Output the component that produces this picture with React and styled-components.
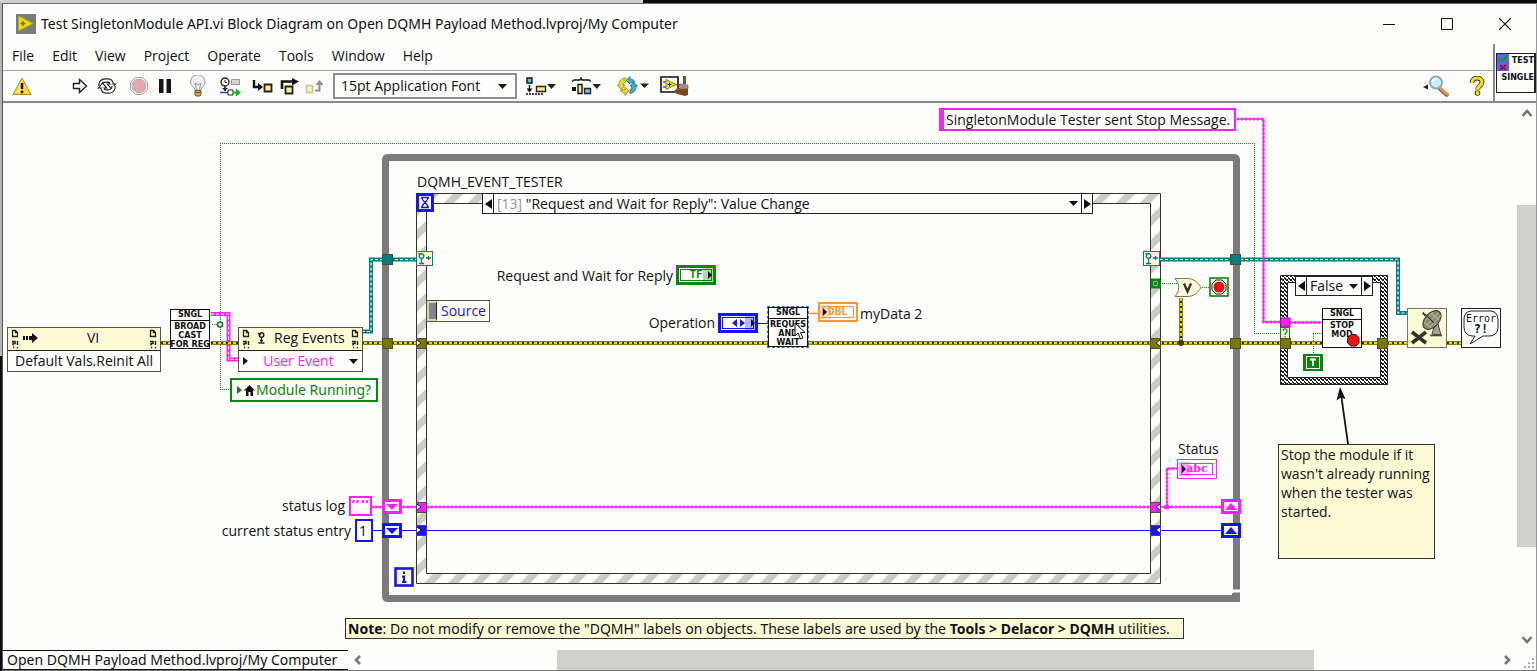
import React from 'react';
import styled, { createGlobalStyle, css } from 'styled-components';

const UI_FONT = '"Open Sans", "Noto Sans", sans-serif';
const WIDE_FONT = '"Noto Sans", "Open Sans", sans-serif';
const C = {
  paper: '#fdfdfb',
  cream: '#fcfbd6',
  ink: '#111',
  pink: '#ff1cff',
  blue: '#1414ff',
  green: '#0c860c',
  teal: '#00807c',
  olive: '#787800',
  orange: '#ff9438',
  loop: '#7b7b7b',
  thumb: '#cfcfcb',
};

/* Diagram coordinates of the canvas' top-left corner (current scroll position). */
const ORIGIN = { x: 3, y: 103 };

const GlobalStyle = createGlobalStyle`
  *, *::before, *::after { box-sizing: border-box; }
  body { margin: 0; font-family: ${UI_FONT}; font-size: 14px; color: ${C.ink}; background: ${C.paper}; }
  button { margin: 0; padding: 0; border: 0; background: none; font: inherit; color: inherit; }
  svg { display: block; }
`;

/* ---------- window chrome ---------- */

const Desktop = styled.div`
  min-height: 100vh;
  display: flex;
  padding: 3px 0 0 2px;
  background:
    linear-gradient(#cfcfcf, #cfcfcf) 0 0 / 643px 3px no-repeat,
    linear-gradient(#b4b4b4, #b4b4b4) 0 0 / 2px 356px no-repeat,
    #0b0b0b;
`;
const Window = styled.div`
  flex: 1;
  min-width: 0;
  display: flex;
  flex-direction: column;
  border: 1px solid #777;
  border-color: #6f6f6f #999 #777 #555;
  background: ${C.paper};
`;
const TitleBar = styled.header`
  display: flex;
  align-items: center;
  height: 40px;
  padding: 0 2px 0 13px;
`;
const Title = styled.h1`
  flex: 1;
  margin: 0 0 0 5px;
  font-family: ${WIDE_FONT};
  font-size: 14px;
  font-weight: 400;
  line-height: 22px;
  white-space: nowrap;
`;
const CaptionButton = styled.button`
  width: 58px;
  height: 40px;
  display: grid;
  place-items: center;
`;
const Bars = styled.div`
  display: flex;
  border-bottom: 2px solid #8a8a8a;
`;
const BarsMain = styled.div`
  flex: 1;
  min-width: 0;
`;
const MenuBar = styled.nav`
  display: flex;
  align-items: center;
  gap: 18px;
  height: 27px;
  padding: 0 9px 2px;
  border-bottom: 1px solid #a8a8a8;
`;
const MenuItem = styled.button`
  line-height: 20px;
`;
const Toolbar = styled.div`
  display: flex;
  align-items: center;
  height: 30px;
  padding: 0 8px 0 6px;
`;
const ToolGroup = styled.div`
  display: flex;
  align-items: center;
  margin-left: ${(p) => p.$gap || 0}px;
`;
const Tool = styled.button`
  width: ${(p) => p.$w}px;
  height: 26px;
  display: grid;
  place-items: center;
`;
const Spacer = styled.div`
  flex: 1;
`;
const FontPicker = styled.label`
  display: grid;
  grid-template-columns: 1fr 26px;
  align-items: center;
  width: 184px;
  height: 26px;
  margin-left: 6px;
  border: 2px solid #8e8e8e;
`;
const FontSelect = styled.select`
  grid-area: 1 / 1 / 2 / 3;
  appearance: none;
  width: 100%;
  height: 22px;
  padding: 0 0 0 6px;
  border: 0;
  background: transparent;
  font: inherit;
  line-height: 20px;
  color: inherit;
`;
const FontArrow = styled.span`
  grid-area: 1 / 2;
  justify-self: center;
  pointer-events: none;
`;
const IconPane = styled.div`
  display: flex;
  align-items: center;
  padding: 0 0 0 1px;
  border-left: 2px solid #8a8a8a;
`;
const ProjectIcon = styled.div`
  display: grid;
  grid-template-columns: 12px 1fr;
  grid-template-rows: 17px 1fr;
  width: 40px;
  height: 40px;
  border: 1px solid #222;
  border-right-width: 2px;
  font: bold 8px/14px "DejaVu Sans", sans-serif;
  text-align: right;
`;
const IconLine = styled.span`
  grid-column: ${(p) => (p.$wide ? '1 / 3' : '2')};
`;

/* ---------- scroll bars ---------- */

const Work = styled.div`
  flex: 1;
  display: grid;
  grid-template-columns: minmax(0, 1fr) 19px;
  grid-template-rows: minmax(546px, 1fr) 20px;
`;
const VBar = styled.div`
  display: flex;
  flex-direction: column;
`;
const HRow = styled.div`
  display: flex;
`;
const Track = styled.div`
  flex: 1;
  display: flex;
  flex-direction: ${(p) => (p.$vertical ? 'column' : 'row')};
`;
const TrackPart = styled.div`
  flex: ${(p) => p.$grow} 0 0;
  background: ${(p) => (p.$thumb ? C.thumb : 'transparent')};
`;
const ScrollButton = styled.button`
  width: 20px;
  height: 20px;
  display: grid;
  place-items: center;
`;
const Target = styled.div`
  border-top: 1px solid #111;
  border-bottom: 1px solid #111;
  padding: 0 11px 0 4px;
  font-family: ${WIDE_FONT};
  line-height: 17px;
  white-space: nowrap;
`;
const Corner = styled.div`
  display: flex;
  align-items: flex-end;
  justify-content: flex-end;
`;

/* ---------- diagram canvas ---------- */

const Canvas = styled.main`
  position: relative;
  overflow: hidden;
`;
const placed = css`
  position: absolute;
  left: ${(p) => p.$x - ORIGIN.x}px;
  top: ${(p) => p.$y - ORIGIN.y}px;
`;
const Wires = styled.svg`
  position: absolute;
  inset: 0;
  width: 100%;
  height: 100%;
`;
const Glyph = styled.svg`
  ${placed}
`;
const Label = styled.span`
  ${placed}
  width: ${(p) => (p.$w ? `${p.$w}px` : 'auto')};
  text-align: ${(p) => (p.$w ? 'right' : 'left')};
  line-height: 20px;
  white-space: nowrap;
`;
const Selector = styled.div`
  ${placed}
  display: grid;
  grid-template-columns: 10px 1fr 10px;
  width: ${(p) => p.$w}px;
  height: ${(p) => p.$h}px;
  border: 1px solid #222;
  background: ${C.paper};
`;
const SelectorArrow = styled.button`
  display: grid;
  place-items: center;
`;
const SelectorValue = styled.button`
  display: flex;
  align-items: center;
  justify-content: space-between;
  padding: 0 3px;
  border: solid #222;
  border-width: 0 1px;
  line-height: 18px;
  white-space: nowrap;
`;
const Dim = styled.span`
  color: #999;
`;
const PropertyNode = styled.div`
  ${placed}
  width: ${(p) => p.$w}px;
  border: 1px solid #55553f;
  background: ${C.paper};
`;
const NodeHead = styled.div`
  display: grid;
  grid-template-columns: 14px 1fr 14px;
  align-items: center;
  height: 23px;
  background: ${C.cream};
  border-bottom: 1px solid #222;
`;
const NodeTitle = styled.div`
  display: flex;
  align-items: center;
  gap: ${(p) => p.$gap}px;
  padding-left: ${(p) => p.$pad}px;
  line-height: 18px;
  padding-bottom: 2px;
  white-space: nowrap;
`;
const NodeRow = styled.button`
  display: flex;
  align-items: center;
  justify-content: ${(p) => (p.$menu ? 'space-between' : 'center')};
  width: 100%;
  height: 20px;
  padding: 0 ${(p) => (p.$menu ? 4 : 0)}px;
  line-height: 20px;
  color: ${(p) => (p.$menu ? C.pink : C.ink)};
  white-space: nowrap;
`;
const SubVi = styled.div`
  ${placed}
  width: 40px;
  height: 40px;
  border: 1px solid #111;
  outline: ${(p) => (p.$selected ? '1px dashed #2f7fb8' : 'none')};
  background: ${C.paper};
  font: bold 8px/9px "DejaVu Sans", sans-serif;
  text-align: center;
  white-space: nowrap;
`;
const SubViHead = styled.div`
  height: 11px;
  margin-bottom: 1px;
  line-height: 10px;
  border-bottom: 1px solid #111;
`;
const SubViLine = styled.div`
  display: flex;
  justify-content: center;
`;
const Local = styled.div`
  ${placed}
  display: flex;
  align-items: center;
  width: 148px;
  height: 24px;
  padding: 0 4px;
  border: 2px solid ${C.green};
  background: ${C.paper};
  color: ${C.green};
  font-family: ${WIDE_FONT};
  line-height: 20px;
  white-space: nowrap;
`;
const EventData = styled.div`
  ${placed}
  display: flex;
  height: 22px;
  border: 1px solid #55553f;
  background: ${C.paper};
  color: ${C.blue};
  line-height: 20px;
`;
const EventGrip = styled.span`
  width: 10px;
  border: 2px solid #d8d6bd;
  border-right: 1px solid #222;
  background: #858585;
`;
const EventName = styled.span`
  padding: 0 3px 0 4px;
`;
const Terminal = styled.div`
  ${placed}
  display: grid;
  place-items: center;
  width: 40px;
  height: 20px;
  border: ${(p) => p.$b}px solid ${(p) => p.$c};
  background: ${C.paper};
  color: ${(p) => p.$c};
  font: bold 11px/10px ${(p) => (p.$serif ? '"DejaVu Serif", serif' : '"DejaVu Sans Mono", monospace')};
`;
const TerminalInner = styled.span`
  display: grid;
  place-items: center;
  width: 32px;
  height: 12px;
  border: 1px solid ${(p) => p.$c};
`;
const Constant = styled.div`
  ${placed}
  padding: 0 4px 0 2px;
  height: 23px;
  border: 2px solid ${(p) => p.$c};
  border-left-width: ${(p) => p.$left || 2}px;
  background: ${C.paper};
  line-height: 19px;
  white-space: nowrap;
`;
const Comment = styled.p`
  ${placed}
  width: ${(p) => p.$w}px;
  height: ${(p) => p.$h}px;
  margin: 0;
  padding: 0 2px;
  border: 1px solid #333;
  background: ${C.cream};
  font-family: ${(p) => (p.$wide ? WIDE_FONT : 'inherit')};
  line-height: 19px;
  white-space: pre-line;
`;

const DownArrow = () => (
  <svg width="9" height="5" viewBox="0 0 9 5" aria-hidden="true"><path d="M0 0h9L4.500 5z" fill="#111" /></svg>
);
const SideArrow = ({ left }) => (
  <svg width="7" height="10" viewBox="0 0 7 10" aria-hidden="true"><path d={left ? 'M7 0v10L0 5z' : 'M0 0v10l7-5z'} fill="#111" /></svg>
);
const Chevron = ({ d }) => (
  <svg width="12" height="12" viewBox="0 0 12 12" fill="none" stroke="#777" strokeWidth="2.600" aria-hidden="true"><path d={d} /></svg>
);
const PageMark = () => (
  <svg width="14" height="22" viewBox="0 0 14 22" fill="none" stroke="#222" aria-hidden="true">
    <path d="M4.500 2.500h3l2 2v4h-5zM7.500 2.500v2h2" strokeWidth="1.300" />
    <path d="M4 13.500h3v2h-2v2M5 19.500h1.200M9.500 13v4M9.500 19v1.200" strokeWidth="1.500" />
  </svg>
);

/* ---------- toolbar icons ---------- */

const CYCLE = 'M3.500 9V7.500Q4 3.500 9 3.500h1.500q4 0 4 4';
const CYCLE_BACK = 'M16.500 9v1.500Q16 14.500 11 14.500H9.500q-4 0-4-4';

const icons = {
  warning: (
    <svg width="20" height="19" viewBox="0 0 20 19"><path d="M10 1 19 17.500H1z" fill="#ffd83a" stroke="#b88a10" strokeLinejoin="round" /><path d="M10 3 4 15h6z" fill="#ffee90" opacity=".7" /><path d="M10 6v6" stroke="#111" strokeWidth="2.400" /><circle cx="10" cy="15" r="1.400" fill="#111" /></svg>
  ),
  run: (
    <svg width="16" height="16" viewBox="0 0 16 16"><path d="M1.500 5.500h6v-4l7 6.500-7 6.500v-4h-6z" fill="#fff" stroke="#222" strokeWidth="1.400" /></svg>
  ),
  loop: (
    <svg width="20" height="18" viewBox="0 0 20 18" fill="none">
      <path d={CYCLE} stroke="#222" strokeWidth="4.400" /><path d="M10.500 7h8l-4 5z" fill="#fff" stroke="#222" strokeWidth="1.200" /><path d={CYCLE} stroke="#fff" strokeWidth="2.200" />
      <path d={CYCLE_BACK} stroke="#222" strokeWidth="4.400" /><path d="M9.500 11h-8l4-5z" fill="#fff" stroke="#222" strokeWidth="1.200" /><path d={CYCLE_BACK} stroke="#fff" strokeWidth="2.200" />
    </svg>
  ),
  abort: (
    <svg width="20" height="20" viewBox="0 0 20 20"><path d="M6.500 1.500h7l5 5v7l-5 5h-7l-5-5v-7z" fill="#f5f1f1" stroke="#a9a1a1" /><path d="M7 3.500h6L16.500 7v6L13 16.500H7L3.500 13V7z" fill="#e0aaaa" stroke="#c7b0b0" /></svg>
  ),
  pause: (
    <svg width="12" height="14" viewBox="0 0 12 14"><path d="M0 0h4.500v14H0zM7.500 0H12v14H7.500z" fill="#151515" /></svg>
  ),
  bulb: (
    <svg width="18" height="22" viewBox="0 0 18 22"><path d="M6 15c0-3-4.500-4-4.500-8a7 7 0 0 1 14.500 0c0 4-4 5-4 8z" fill="#eee" stroke="#999" /><path d="M7.500 14 6 8l3 2 3-2-1.500 6" fill="none" stroke="#999" /><path d="M6 15.500h6v4l-1 1.500H7l-1-1.500z" fill="#d8a44c" stroke="#6d5a38" /><path d="M6 17.500h6" stroke="#6d5a38" /></svg>
  ),
  retain: (
    <svg width="21" height="19" viewBox="0 0 21 19"><circle cx="5" cy="5" r="4" fill="#fff" stroke="#222" strokeWidth="1.300" /><path d="M5 3v2.500h2" stroke="#222" fill="none" /><path d="M5 9v5" stroke="#222" strokeWidth="1.600" /><path d="M11.500 2.500h8v5h-8z" fill="#d5d5d5" stroke="#999" /><path d="M0 15.500h8" stroke="#2b48d8" strokeWidth="1.600" /><path d="M2 11l3 3 3-3z" fill="#222" /><path d="M8 13h5v5H8z" fill="#fff" stroke="#222" /><path d="M13 14.500h3v-3l5 4-5 4v-3h-3z" fill="#18b818" /></svg>
  ),
  into: (
    <svg width="21" height="14" viewBox="0 0 21 14"><path d="M2 1v7h6" fill="none" stroke="#111" strokeWidth="2.400" /><path d="M6 4l5 4-5 4z" fill="#111" /><path d="M12.500 5.500h7v7h-7z" fill="#f7ef8b" stroke="#222" strokeWidth="1.800" /></svg>
  ),
  over: (
    <svg width="20" height="17" viewBox="0 0 20 17"><path d="M2 11V3.500h11" fill="none" stroke="#111" strokeWidth="2.600" /><path d="M12 0l7 3.500-7 4z" fill="#111" /><path d="M5.500 8.500h7v7h-7z" fill="#f7ef8b" stroke="#222" strokeWidth="1.800" /></svg>
  ),
  out: (
    <svg width="20" height="15" viewBox="0 0 20 15"><path d="M1.500 6.500h6v7h-6z" fill="#f9f3b0" stroke="#c9c39a" strokeWidth="1.400" /><path d="M10 11.500h4.500V5" fill="none" stroke="#8d8d8d" strokeWidth="2" /><path d="M10.500 6l4-5 4 5z" fill="#8d8d8d" /></svg>
  ),
  align: (
    <svg width="30" height="18" viewBox="0 0 30 18"><path d="M1 1h5v5H1z" fill="#5cc4ea" stroke="#111" strokeWidth="1.400" /><path d="M3.500 8v5" stroke="#111" strokeWidth="1.400" /><path d="M.500 11.500h6l-3 4z" fill="#111" /><path d="M0 17h18" stroke="#111" strokeWidth="1.300" strokeDasharray="2 1" /><path d="M10.500 9.500h9v5h-9z" fill="#f7ef8b" stroke="#222" strokeWidth="1.400" /><path d="M21 7h9l-4.500 5z" fill="#222" /></svg>
  ),
  distribute: (
    <svg width="30" height="18" viewBox="0 0 30 18"><path d="M1 4.500 3 3h6l1-2 1 2h7l2 1.500" fill="none" stroke="#111" strokeWidth="1.300" /><path d="M1 10h4v4H1z" fill="#111" /><path d="M7 7.500h4v9H7z" fill="#f7ef8b" stroke="#111" strokeWidth="1.400" /><path d="M13.500 11.500h6v5h-6z" fill="#5cc4ea" stroke="#222" strokeWidth="1.400" /><path d="M21.500 7H30l-4.200 5z" fill="#222" /></svg>
  ),
  reorder: (
    <svg width="32" height="20" viewBox="0 0 32 20">
      <path d="M9 2C4 2 2 5 2 9H.500L4.500 13.500 8 9.500H6.500C6.500 7 7 6 9 6z" fill="#e6dc20" stroke="#8c8410" strokeWidth=".8" />
      <path d="M3 14c1 2 3 3 5 3v2.500L12 15 8 11v2.500z" fill="#e6dc20" stroke="#8c8410" strokeWidth=".8" />
      <path d="M13 17.500c5-1 6-4 6-7.500h1.500L16.500 6 13 10h1.500c0 2 0 3-1.500 4z" fill="#46a9cf" stroke="#256b88" strokeWidth=".8" />
      <path d="M18 6c-1-2-3-3-5-3V.500L9.500 4.500 13 8V6.500z" fill="#46a9cf" stroke="#256b88" strokeWidth=".8" />
      <path d="M23 7.500h9L27.500 12z" fill="#222" />
    </svg>
  ),
  cleanup: (
    <svg width="30" height="20" viewBox="0 0 30 20"><path d="M1 1h17v15H1z" fill="#fff" stroke="#111" strokeWidth="1.600" /><path d="M3 6h4M3 11h4" stroke="#3548e0" strokeWidth="1.300" /><path d="M6 3.500 16 8.500 6 13.500z" fill="#ffe600" stroke="#8a7600" /><path d="M16 8.500h4" stroke="#e01818" /><path d="M7.500 8.500h4m-2-2v4" stroke="#111" /><path d="M24.500 0v8" stroke="#8a4d1d" strokeWidth="3" /><path d="M20 8l8 1v4l-9-2z" fill="#9a9a9a" stroke="#555" strokeWidth=".6" /><path d="M18 12l10 1v6l-3 1-8-2-3-3z" fill="#7c4720" /></svg>
  ),
  search: (
    <svg width="28" height="22" viewBox="0 0 28 22"><path d="M0 12l5-2.500v5z" fill="#222" /><path d="M16 13l9 8" stroke="#7a5f60" strokeWidth="4" /><path d="m16 12 9 8" stroke="#e89a4c" strokeWidth="2.800" /><circle cx="13" cy="7.500" r="6" fill="#c9edfb" stroke="#8ea5bd" strokeWidth="1.800" /><path d="M9.500 7a4 4 0 0 1 4-3.500" fill="none" stroke="#fff" strokeWidth="2" /></svg>
  ),
  help: (
    <svg width="16" height="20" viewBox="0 0 16 20"><path d="M3 7c0-3 2-5 5-5s5 2 5 4c0 4-4 3.500-4.500 7.500" fill="none" stroke="#3d3a08" strokeWidth="4.800" /><circle cx="8.500" cy="17" r="2.800" fill="#3d3a08" /><path d="M3 7c0-3 2-5 5-5s5 2 5 4c0 4-4 3.500-4.500 7.500" fill="none" stroke="#f0e11b" strokeWidth="3.200" /><circle cx="8.500" cy="17" r="1.900" fill="#f0e11b" /></svg>
  ),
};

const TOOL_GROUPS = [
  { gap: 0, tools: [['warning', 26, 'Warnings']] },
  { gap: 32, tools: [['run', 26, 'Run'], ['loop', 28, 'Run continuously'], ['abort', 36, 'Abort'], ['pause', 16, 'Pause']] },
  { gap: 9, tools: [['bulb', 32, 'Highlight execution'], ['retain', 32, 'Retain wire values'], ['into', 32, 'Step into'], ['over', 24, 'Step over'], ['out', 25, 'Step out']] },
];
const LAYOUT_TOOLS = [['align', 30, 'Align objects', 9], ['distribute', 30, 'Distribute objects', 15], ['reorder', 32, 'Reorder', 16], ['cleanup', 30, 'Clean up diagram', 11]];

/* ---------- wires ---------- */

const ErrorWire = ({ d }) => (
  <g fill="none">
    <path d={d} stroke="#8a8300" strokeWidth="4" />
    <path d={d} stroke="#e6da00" strokeWidth="2" />
    <path d={d} stroke="#2e2b00" strokeWidth="2" strokeDasharray="2 3" />
  </g>
);
const Cable = ({ d, c }) => (
  <g fill="none">
    <path d={d} stroke={c} strokeWidth="4" />
    <path d={d} stroke="#fff" strokeWidth="1.200" strokeDasharray="3 2" />
  </g>
);
const StringWire = ({ d }) => (
  <g fill="none" stroke={C.pink}>
    <path d={d} strokeWidth="1.600" />
    <path d={d} strokeWidth="3" strokeDasharray="2 2" opacity=".75" />
  </g>
);
const BoolWire = ({ d }) => (
  <g fill="none">
    <path d={d} stroke="#cfeccf" />
    <path d={d} stroke="#1c961c" strokeDasharray="1 1" />
  </g>
);
const Tunnel = ({ x, y, c, w = 10, h = 10 }) => <rect x={x + 0.5} y={y + 0.5} width={w} height={h} fill={c} stroke="#4b4b3c" />;
const Notch = ({ x, y, left }) => <path d={left ? `M${x + 4} ${y - 3}l-4 3 4 3` : `M${x} ${y - 3}l4 3-4 3`} fill="#fff" stroke="#222" />;
const ShiftRegister = ({ x, y, c, up }) => (
  <g>
    <rect x={x + 1.5} y={y + 1.5} width="17" height="12" fill={C.paper} stroke={c} strokeWidth="3" />
    <path d={up ? `M${x + 4} ${y + 11}l6-7 6 7z` : `M${x + 4} ${y + 5}h12l-6 6z`} fill={c} />
  </g>
);
const EventTunnel = ({ x, y }) => (
  <g>
    <rect x={x + 0.5} y={y + 0.5} width="16" height="14" fill={C.cream} stroke={C.teal} />
    <g fill="none" stroke={C.teal} strokeWidth="1.300"><circle cx={x + 5.5} cy={y + 5} r="2.300" /><path d={`M${x + 2.500} ${y + 2}l2 2M${x + 5.500} ${y + 7}v5M${x + 3} ${y + 12.500}h5M${x + 10} ${y + 7}h5M${x + 12.500} ${y + 5}v4`} /></g>
  </g>
);

function Structures() {
  return (
    <Wires aria-hidden="true">
      <defs>
        <pattern id="hatch" width="24" height="24" patternUnits="userSpaceOnUse" patternTransform="translate(4 0)">
          <rect width="24" height="24" fill={C.paper} />
          <path d="M0 24 24 0M-12 12 12-12M12 36 36 12" stroke="#eeeebc" strokeWidth="8" />
          <path d="M0 24 24 0M-12 12 12-12M12 36 36 12" stroke="#cbcbcb" strokeWidth="6.600" />
        </pattern>
        <pattern id="weave" width="4" height="4" patternUnits="userSpaceOnUse">
          <rect width="4" height="4" fill="#222" />
          <path d="M0 0h2v1H0zM1 1h2v1H1zM2 2h2v1H2zM0 3h1v1H0zM3 1h1v1H3z" fill="#fff" />
        </pattern>
      </defs>
      <g transform={`translate(${-ORIGIN.x} ${-ORIGIN.y})`}>
        <rect x="385.500" y="157.500" width="851" height="441" rx="2" fill="none" stroke={C.loop} strokeWidth="7" />
        <path d="M1232 591h9" stroke={C.paper} strokeWidth="3" />
        <path d="M1232 593h8v9h-8z" fill={C.loop} />
        <path fillRule="evenodd" d="M416.500 193.500h744v390h-744zM426.500 203.500v370h724v-370z" fill="url(#hatch)" stroke="#333" />
        <path fillRule="evenodd" d="M1280.500 275.500h107v109h-107zM1287.500 282.500v95h93v-95z" fill="url(#weave)" stroke="#222" />

        <BoolWire d="M212 324.500h8M220.500 143v247M220 143.500h1034M1254.500 143v190M1254 333.500h26M220 389.500h11" />
        <BoolWire d="M1160 283.500h20M1202 287.500h8M1313.500 353v-20M1313 333.500h9" />
        <circle cx="220" cy="324.500" r="2.500" fill="#fff" stroke={C.green} strokeWidth="1.500" />

        <Cable c={C.pink} d="M211 314h17.500v45.500H239" />
        <ErrorWire d="M161 343h9M211 343h27M362 343h918M1290 343h32M1362 343h45M1447 343h14M1181 343v-45" />
        <Cable c={C.teal} d="M362 331.500h9V259.500h46" />
        <Cable c={C.teal} d="M1160 259.500h238v53.500h10" />
        <StringWire d="M371 507h860M1167 507v-38.500h10" />
        <StringWire d="M1237 119h26.500v203H1281M1290 322.500h32" />
        <path d="M371 530.500h851M757 323.500h11" stroke={C.blue} />
        <path d="M808 313.500h11" stroke={C.orange} strokeWidth="1.500" />
        <circle cx="1167" cy="507" r="2.500" fill={C.pink} />
        <circle cx="1181" cy="343" r="3" fill="#3a3800" />

        <Tunnel x={382} y={254} c={C.teal} />
        <Tunnel x={1230} y={254} c={C.teal} />
        <Tunnel x={382} y={338} c={C.olive} />
        <Tunnel x={1230} y={338} c={C.olive} />
        <Tunnel x={416} y={338} c={C.olive} />
        <Tunnel x={1150} y={338} c={C.olive} />
        <Notch x={417} y={343} />
        <Notch x={1156} y={343} left />
        <Tunnel x={416} y={502} c={C.pink} />
        <Tunnel x={1150} y={502} c={C.pink} />
        <Tunnel x={416} y={525} c={C.blue} />
        <Tunnel x={1150} y={525} c={C.blue} />
        <Notch x={417} y={507} />
        <Notch x={1156} y={507} left />
        <Notch x={417} y={530} />
        <Notch x={1156} y={530} left />
        <rect x="1152" y="280" width="7" height="7" fill="#fff" stroke={C.green} strokeWidth="3" />
        <rect x="1154" y="282" width="3" height="3" fill={C.green} />
        <EventTunnel x={416} y={251} />
        <EventTunnel x={1143} y={251} />
        <ShiftRegister x={382} y={499} c={C.pink} />
        <ShiftRegister x={382} y={523} c={C.blue} />
        <ShiftRegister x={1221} y={499} c={C.pink} up />
        <ShiftRegister x={1221} y={523} c={C.blue} up />

        <rect x="1281" y="318" width="9" height="9" fill={C.pink} stroke="#b010b0" />
        <rect x="1280.500" y="327.500" width="9" height="11" fill="#f5fbe6" stroke={C.green} />
        <path d="M1283 331c0-3 4-3 4 0 0 2-2 2-2 4m0 1v1.500" fill="none" stroke={C.green} strokeWidth="1.200" />
        <Tunnel x={1280} y={338} c={C.olive} />
        <Tunnel x={1377} y={338} c={C.olive} />

        <path d="M1348 444l-7-50" stroke="#111" strokeWidth="1.800" />
        <path d="M1340 387l5.500 12-5-1.500-4 3z" fill="#111" />
      </g>
    </Wires>
  );
}

function Diagram() {
  return (
    <Canvas>
      <Structures />

      {/* initialisation */}
      <PropertyNode $x={7} $y={327} $w={154}>
        <NodeHead>
          <PageMark />
          <NodeTitle $gap={49} $pad={1}>
            <svg width="15" height="12" viewBox="0 0 15 12" aria-hidden="true"><path d="M0 4h2v4H0zM3 4h2v4H3zM6 4h3V1l6 5-6 5V8H6z" fill="#111" /></svg>
            VI
          </NodeTitle>
          <PageMark />
        </NodeHead>
        <NodeRow>Default Vals.Reinit All</NodeRow>
      </PropertyNode>
      <SubVi $x={170} $y={309}>
        <SubViHead>SNGL</SubViHead>
        <SubViLine>BROAD</SubViLine>
        <SubViLine>CAST</SubViLine>
        <SubViLine>FOR REG</SubViLine>
      </SubVi>
      <PropertyNode $x={238} $y={327} $w={125}>
        <NodeHead>
          <PageMark />
          <NodeTitle $gap={8} $pad={4}>
            <svg width="9" height="12" viewBox="0 0 9 12" fill="none" stroke="#222" strokeWidth="1.400" aria-hidden="true"><circle cx="4.500" cy="3" r="2.300" /><path d="M1 1l3 2M4.500 5.500v5M1.500 11h6M3 8.500h3" /></svg>
            Reg Events
          </NodeTitle>
          <PageMark />
        </NodeHead>
        <NodeRow $menu>
          <svg width="5" height="8" viewBox="0 0 5 8" aria-hidden="true"><path d="M0 0v8l5-4z" fill="#111" /></svg>
          User Event
          <DownArrow />
        </NodeRow>
      </PropertyNode>
      <Local $x={230} $y={378}>
        <svg width="20" height="12" viewBox="0 0 20 12" aria-hidden="true"><path d="M1 2v8l5-4z" fill={C.green} /><path d="M8 6.500 13.500 1 19 6.500h-2V12h-2.500V8h-2v4H10V6.500z" fill="#111" /></svg>
        Module Running?
      </Local>

      {/* event structure */}
      <Label $x={417} $y={172}>DQMH_EVENT_TESTER</Label>
      <Glyph $x={416} $y={193} width="18" height="19" viewBox="0 0 18 19" aria-hidden="true">
        <rect x="1.500" y="1.500" width="15" height="16" fill={C.paper} stroke={C.blue} strokeWidth="3" />
        <path d="M5 4.500h8M5 14.500h8M6 5c0 3 6 6 6 9M12 5c0 3-6 6-6 9" fill="none" stroke={C.blue} strokeWidth="1.300" />
      </Glyph>
      <Selector $x={482} $y={193} $w={611} $h={21}>
        <SelectorArrow aria-label="Previous event case"><SideArrow left /></SelectorArrow>
        <SelectorValue>
          <span><Dim>[13]</Dim> "Request and Wait for Reply": Value Change</span>
          <DownArrow />
        </SelectorValue>
        <SelectorArrow aria-label="Next event case"><SideArrow /></SelectorArrow>
      </Selector>
      <EventData $x={426} $y={300}><EventGrip /><EventName>Source</EventName></EventData>

      <Label $x={473} $y={266} $w={200}>Request and Wait for Reply</Label>
      <Terminal $x={676} $y={265} $b={3} $c={C.green}>
        <TerminalInner $c={C.green}>TF</TerminalInner>
      </Terminal>
      <Glyph $x={703} $y={268} width="10" height="14" aria-hidden="true"><path d="M0 0h10v14H0z" fill={C.green} opacity=".3" /><path d="M5 3v8l4-4z" fill="#111" /></Glyph>

      <Label $x={515} $y={313} $w={200}>Operation</Label>
      <Terminal $x={718} $y={313} $b={3} $c={C.blue}>
        <TerminalInner $c={C.blue}>
          <svg width="13" height="8" viewBox="0 0 13 8" aria-hidden="true"><path d="M5 0v8L0 4zM8 0v8l5-4z" fill={C.blue} /></svg>
        </TerminalInner>
      </Terminal>
      <Glyph $x={745} $y={316} width="10" height="14" aria-hidden="true"><path d="M0 0h10v14H0z" fill={C.blue} opacity=".3" /><path d="M6 3v8l4-4z" fill="#111" /></Glyph>

      <SubVi $x={768} $y={307} $selected>
        <SubViHead>SNGL</SubViHead>
        <SubViLine>REQUES</SubViLine>
        <SubViLine>AND</SubViLine>
        <SubViLine>WAIT</SubViLine>
      </SubVi>
      <Terminal $x={818} $y={302} $b={2} $c={C.orange}>
        <TerminalInner $c={C.orange}>DBL</TerminalInner>
      </Terminal>
      <Glyph $x={820} $y={305} width="11" height="14" aria-hidden="true"><path d="M0 0h11v14H0z" fill={C.orange} opacity=".3" /><path d="M3 3v8l4-4z" fill="#111" /></Glyph>
      <Label $x={860} $y={304}>myData 2</Label>

      <Glyph $x={1174} $y={277} width="30" height="22" viewBox="0 0 30 22" aria-hidden="true">
        <path d="M1 1.500h12c7 0 11 4 14 9-3 5-7 9-14 9H1c5-6 5-12 0-18z" fill={C.cream} stroke="#77775c" />
        <path d="M10 6.500l3.500 8L17 6.500" fill="none" stroke="#333" strokeWidth="2.400" />
      </Glyph>
      <Glyph $x={1209} $y={277} width="21" height="21" viewBox="0 0 21 21" aria-hidden="true">
        <rect x="1" y="1" width="18" height="18" fill={C.cream} stroke={C.green} strokeWidth="1.600" />
        <path d="M7 3h6l4 4v6l-4 4H7l-4-4V7z" fill="#fff" stroke="#222" />
        <circle cx="10" cy="10" r="5.500" fill="#f00808" />
      </Glyph>

      {/* loop registers */}
      <Label $x={145} $y={496} $w={200}>status log</Label>
      <Glyph $x={349} $y={496} width="23" height="21" viewBox="0 0 23 21" aria-hidden="true">
        <rect x="1" y="1" width="21" height="18" fill={C.paper} stroke={C.pink} strokeWidth="2" />
        <path d="M5 4l-1 3M9 4l-1 3M14.500 4l-1 3M18.500 4l-1 3" stroke={C.pink} strokeWidth="2" />
      </Glyph>
      <Label $x={151} $y={521} $w={200}>current status entry</Label>
      <Constant $x={355} $y={519} $c={C.blue}>1</Constant>
      <Glyph $x={394} $y={567} width="20" height="20" viewBox="0 0 20 20" aria-hidden="true">
        <rect x="1.500" y="1.500" width="17" height="17" fill={C.cream} stroke={C.blue} strokeWidth="2.600" />
        <path d="M10 4.500v2.500M10 8.500v6.500M8 9.500h2M8 15h4.500" stroke="#2020b0" strokeWidth="2.200" />
      </Glyph>
      <Label $x={1178} $y={439}>Status</Label>
      <Terminal $x={1177} $y={459} $b={1} $c={C.pink} $serif>
        <TerminalInner $c={C.pink}>abc</TerminalInner>
      </Terminal>
      <Glyph $x={1179} $y={462} width="11" height="14" aria-hidden="true"><path d="M0 0h11v14H0z" fill={C.pink} opacity=".35" /><path d="M3 3v8l4-4z" fill="#111" /></Glyph>

      {/* shutdown */}
      <Constant $x={939} $y={108} $c={C.pink} $left={5}>SingletonModule Tester sent Stop Message.</Constant>
      <Selector $x={1295} $y={276} $w={78} $h={20}>
        <SelectorArrow aria-label="Previous case"><SideArrow left /></SelectorArrow>
        <SelectorValue>False<DownArrow /></SelectorValue>
        <SelectorArrow aria-label="Next case"><SideArrow /></SelectorArrow>
      </Selector>
      <SubVi $x={1322} $y={308}>
        <SubViHead>SNGL</SubViHead>
        <SubViLine>STOP</SubViLine>
        <SubViLine>MOD</SubViLine>
      </SubVi>
      <Glyph $x={1347} $y={334} width="13" height="13" aria-hidden="true"><path d="M4 .5h5l3 3.500v5L9 12H4L.5 9V4z" fill="#f01010" stroke="#400" /></Glyph>
      <Glyph $x={1303} $y={354} width="20" height="17" viewBox="0 0 20 17" aria-hidden="true">
        <rect width="20" height="17" fill={C.green} />
        <rect x="3.500" y="2.500" width="13" height="12" fill="none" stroke="#fff" />
        <path d="M7 5.500h6M10 5v7" stroke="#fff" strokeWidth="2" />
      </Glyph>
      <Glyph $x={1407} $y={308} width="40" height="40" viewBox="0 0 40 40" aria-hidden="true">
        <rect x=".5" y=".5" width="39" height="39" fill={C.cream} stroke="#77775c" />
        <path d="M28 16l-3 10 9 1-3-11" fill="#a5a58a" stroke="#444" />
        <path d="M23 27.500h12" stroke="#444" strokeWidth="1.600" />
        <ellipse cx="25" cy="12" rx="11" ry="7" transform="rotate(-48 25 12)" fill="#8b8b72" stroke="#333" />
        <path d="M20 17l11-12M23 19 34 7M18 13l8-9M20 9l9 8M24 5l8 7M17 14l7 6" fill="none" stroke="#c9c9a6" strokeWidth=".8" />
        <path d="M15 6h3l9 9M16 4l2 4" fill="none" stroke="#333" strokeWidth="1.200" />
        <path d="M5 24l14 11M19 24 5 35" stroke="#33332b" strokeWidth="3.600" />
      </Glyph>
      <Glyph $x={1461} $y={308} width="40" height="40" viewBox="0 0 40 40" aria-hidden="true">
        <rect x=".5" y=".5" width="39" height="39" fill={C.paper} stroke="#222" />
        <path d="M10 3h20q7 1 7 9v8q-1 8-9 8h-6l-13 8 5-8h-3q-8-1-8-9v-8q0-7 7-8z" fill="#fff" stroke="#222" />
        <text x="20" y="14" textAnchor="middle" fontFamily="DejaVu Sans Mono, monospace" fontSize="10" fill="#111">Error</text>
        <text x="20" y="25" textAnchor="middle" fontFamily="DejaVu Sans Mono, monospace" fontSize="12" fontWeight="700" fill="#111">?!</text>
      </Glyph>
      <Comment $x={1278} $y={444} $w={157} $h={115}>
        {'Stop the module if it\nwasn\'t already running\nwhen the tester was\nstarted.'}
      </Comment>
      <Comment $x={345} $y={618} $w={839} $h={21} $wide>
        <b>Note</b>: Do not modify or remove the "DQMH" labels on objects. These labels are used by the <b>Tools &gt; Delacor &gt; DQMH</b> utilities.
      </Comment>
      <Glyph $x={794} $y={322} width="13" height="18" viewBox="0 0 13 18" aria-hidden="true">
        <path d="M1 1v13l3-3 2.500 6 2.500-1-2.500-5.500H11z" fill="#fff" stroke="#111" />
      </Glyph>
    </Canvas>
  );
}

export default function App() {
  return (
    <Desktop>
      <GlobalStyle />
      <Window>
        <TitleBar>
          <svg width="20" height="20" viewBox="0 0 20 20" aria-hidden="true">
            <rect width="20" height="20" fill="#7b7b7b" />
            <path d="M2.500 2v15L17 9.500z" fill="#e8dc10" stroke="#b5ac14" />
            <path d="M4.500 9.500h5M7 7v5" stroke="#77711a" strokeWidth="1.400" />
          </svg>
          <Title>Test SingletonModule API.vi Block Diagram on Open DQMH Payload Method.lvproj/My Computer</Title>
          <CaptionButton aria-label="Minimize"><svg width="12" height="12"><path d="M0 6.500h12" stroke="#111" /></svg></CaptionButton>
          <CaptionButton aria-label="Maximize"><svg width="12" height="12"><path d="M.5.500h11v11H.5z" fill="none" stroke="#111" /></svg></CaptionButton>
          <CaptionButton aria-label="Close"><svg width="12" height="12"><path d="M0 0l12 12M12 0 0 12" stroke="#111" strokeWidth="1.200" /></svg></CaptionButton>
        </TitleBar>
        <Bars>
          <BarsMain>
            <MenuBar>
              {['File', 'Edit', 'View', 'Project', 'Operate', 'Tools', 'Window', 'Help'].map((m) => <MenuItem key={m}>{m}</MenuItem>)}
            </MenuBar>
            <Toolbar>
              {TOOL_GROUPS.map((g, i) => (
                <ToolGroup key={i} $gap={g.gap}>
                  {g.tools.map(([id, w, name]) => <Tool key={id} $w={w} aria-label={name}>{icons[id]}</Tool>)}
                </ToolGroup>
              ))}
              <FontPicker>
                <FontSelect aria-label="Text settings" defaultValue="15pt Application Font">
                  <option>15pt Application Font</option>
                </FontSelect>
                <FontArrow><DownArrow /></FontArrow>
              </FontPicker>
              {LAYOUT_TOOLS.map(([id, w, name, gap]) => (
                <ToolGroup key={id} $gap={gap}><Tool $w={w} aria-label={name}>{icons[id]}</Tool></ToolGroup>
              ))}
              <Spacer />
              <Tool $w={28} aria-label="Search">{icons.search}</Tool>
              <ToolGroup $gap={18}><Tool $w={16} aria-label="Context help">{icons.help}</Tool></ToolGroup>
            </Toolbar>
          </BarsMain>
          <IconPane>
            <ProjectIcon>
              <svg width="12" height="17" viewBox="0 0 12 17" aria-hidden="true"><path d="M0 0h12v17H0z" fill="#5c62f4" /><path d="M2 4l3 3 5-5" fill="none" stroke="#12a312" strokeWidth="2.400" /><path d="M3 11l6 5M9 11l-6 5" stroke="#a8101c" strokeWidth="2.200" /></svg>
              <IconLine>TEST</IconLine>
              <IconLine $wide>SINGLE</IconLine>
            </ProjectIcon>
          </IconPane>
        </Bars>
        <Work>
          <Diagram />
          <VBar>
            <ScrollButton aria-label="Scroll up"><Chevron d="M1.500 9 6 4l4.500 5" /></ScrollButton>
            <Track $vertical><TrackPart $grow={82} /><TrackPart $grow={341} $thumb /><TrackPart $grow={83} /></Track>
            <ScrollButton aria-label="Scroll down"><Chevron d="M1.500 3 6 8l4.500-5" /></ScrollButton>
          </VBar>
          <HRow>
            <Target>Open DQMH Payload Method.lvproj/My Computer</Target>
            <ScrollButton aria-label="Scroll left"><Chevron d="M8 2 4 6l4 4" /></ScrollButton>
            <Track><TrackPart $grow={188} /><TrackPart $grow={757} $thumb /><TrackPart $grow={183} /></Track>
            <ScrollButton aria-label="Scroll right"><Chevron d="M4 2l4 4-4 4" /></ScrollButton>
          </HRow>
          <Corner>
            <svg width="12" height="12" viewBox="0 0 12 12" aria-hidden="true"><path d="M8 0h2v2H8zM4 4h2v2H4zM8 4h2v2H8zM0 8h2v2H0zM4 8h2v2H4zM8 8h2v2H8z" fill="#aaa" /></svg>
          </Corner>
        </Work>
      </Window>
    </Desktop>
  );
}
